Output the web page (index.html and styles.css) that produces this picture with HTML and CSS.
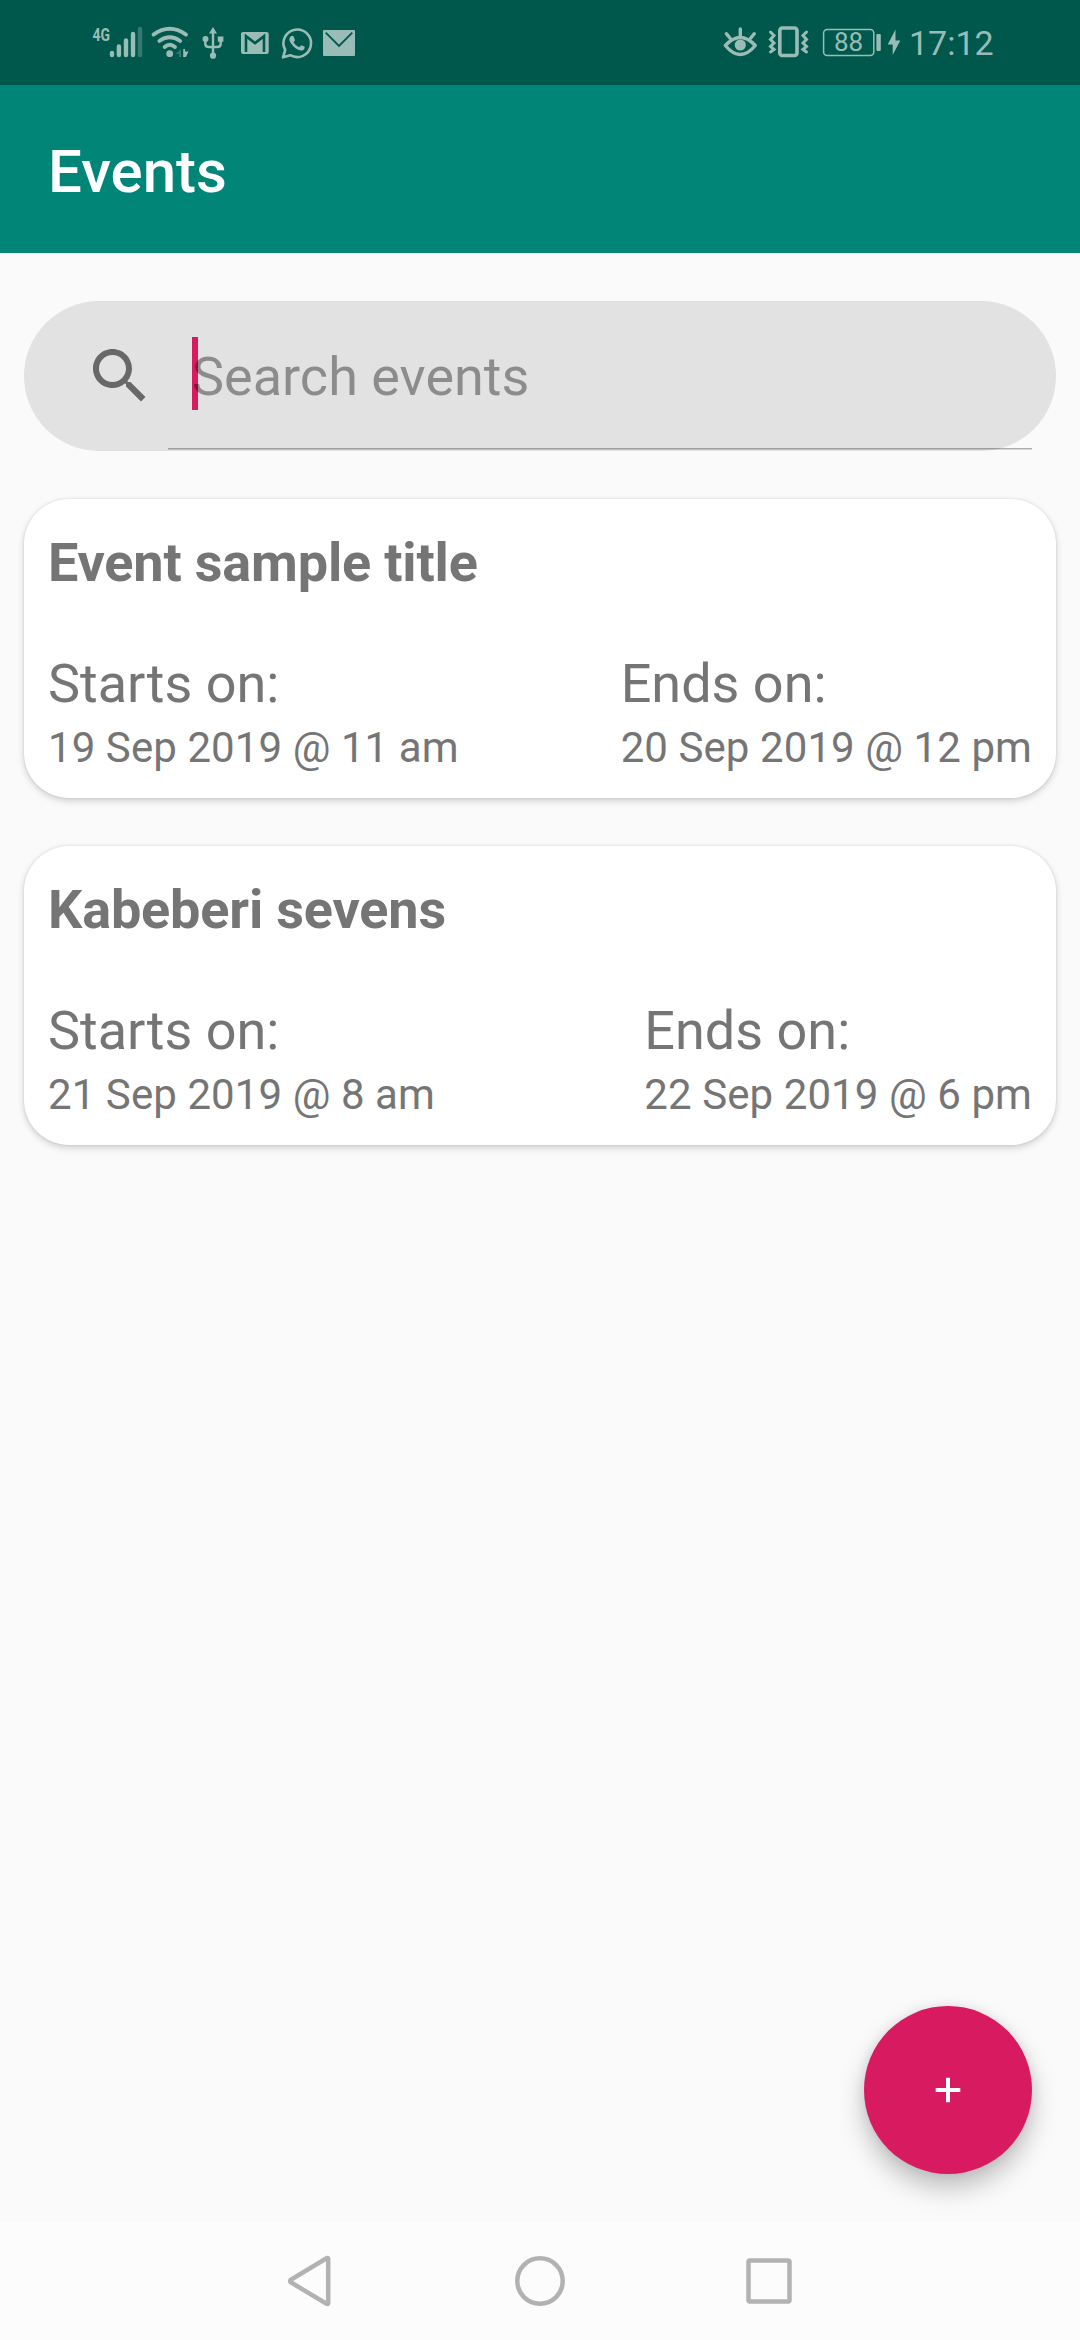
FILE: index.html
```html
<!DOCTYPE html>
<html lang="en">
<head>
<meta charset="utf-8">
<title>Events</title>
<link rel="stylesheet" href="styles.css">
</head>
<body>
<div class="screen">
  <header class="status-bar">
    <div class="status-group">
      <svg width="56" height="85" viewBox="90 0 56 85">
        <text class="network-type" x="92.5" y="40.7" textLength="17.5" lengthAdjust="spacingAndGlyphs">4G</text>
        <g class="line" stroke-width="4.4" stroke-linecap="round">
          <path d="M112 53V55M118.9 46.5V55M126 40.5V55M133 34V55"/>
          <path d="M140 29V55" opacity=".35"/>
        </g>
      </svg>
      <svg width="50" height="85" viewBox="146 0 50 85">
        <g class="line" stroke-width="3.8" stroke-linecap="round">
          <path d="M153.5 34.6Q169.7 23 186 34.6M159.3 41Q169.7 33.5 180.2 41M164.6 47Q169.7 42.5 175 47"/>
        </g>
        <circle class="solid" cx="169.7" cy="53.7" r="3.4"/>
        <path class="solid" d="M175.5 54L181 49.3V57H179V54Z" opacity=".35"/>
        <path class="solid" d="M183.2 49H185V51.5H188.5L186 57H183.2Z"/>
      </svg>
      <svg width="36" height="85" viewBox="196 0 36 85">
        <path class="line" stroke-width="2.4" d="M213 32V54M205.3 39V44Q205.3 47 209 47H217Q220.7 47 220.7 44V39"/>
        <path class="solid" d="M213 27L217 33.5H209Z"/>
        <circle class="solid" cx="213" cy="55.7" r="3.1"/>
        <circle class="solid" cx="205.5" cy="39" r="3"/>
        <rect class="solid" x="217.8" y="36.5" width="5.6" height="5.2"/>
      </svg>
      <svg width="44" height="85" viewBox="232 0 44 85">
        <rect class="solid" x="241" y="32" width="27.7" height="22" rx="2"/>
        <path class="cut" stroke-width="2.6" d="M246 52V36.2L255 43L264 36.2V52"/>
      </svg>
      <svg width="42" height="85" viewBox="276 0 42 85">
        <path class="line" stroke-width="2.6" stroke-linejoin="round" d="M283 57.3L285.2 50A13.8 13.8 0 1 1 290.3 55.2Z"/>
        <path class="solid" d="M291 36.2Q292.6 35.2 293.6 36.5L295 40Q295 41 293.5 42.3Q295.5 46.2 299.2 47.3L301 45.5Q302 45.2 304.7 46.8Q305.2 48.8 303 50.2Q300 51.3 295.5 48.2Q289.5 43.2 289.3 39.3Q289.5 37.2 291 36.2Z"/>
      </svg>
      <svg width="42" height="85" viewBox="318 0 42 85">
        <rect class="solid" x="323" y="30" width="32" height="26" rx="1"/>
        <path class="cut" stroke-width="1.8" d="M325.7 32.7L339 46L352.3 32.7"/>
      </svg>
    </div>
    <div class="status-group">
      <svg width="48" height="85" viewBox="716 0 48 85">
        <g class="line" stroke-width="3.4" stroke-linecap="round">
          <path d="M725.3 45.5Q740.3 29.5 755.3 45.5Q740.3 63.5 725.3 45.5Z" stroke-linejoin="round"/>
          <path d="M740.3 29V36M726.3 33.7L730.3 38.5M754.3 33.7L750.3 38.5"/>
        </g>
        <circle class="solid" cx="740.3" cy="45" r="5.6"/>
      </svg>
      <svg width="50" height="85" viewBox="764 0 50 85">
        <rect class="line" stroke-width="3.6" x="779.8" y="28" width="17.2" height="27.5" rx="2.5"/>
        <path class="line" stroke-width="3" stroke-linecap="round" d="M770.5 32L774 35.5L770.5 39.5L774 43L770.5 46.5L774 49.5L770.5 52M806.5 32L803 35.5L806.5 39.5L803 43L806.5 46.5L803 49.5L806.5 52"/>
      </svg>
      <svg width="70" height="85" viewBox="814 0 70 85">
        <rect class="line" stroke-width="1.5" x="823.6" y="29.5" width="50.2" height="26" rx="3.5"/>
        <rect class="solid" x="876.4" y="34" width="4.4" height="17" rx="1.2"/>
        <text class="battery-level" x="834" y="51.2">88</text>
      </svg>
      <svg width="25" height="85" viewBox="884 0 25 85">
        <path class="solid" d="M895.5 29.5L887.7 44.5H892.7V55L900.3 40.5H895.5Z"/>
      </svg>
      <time class="clock">17:12</time>
    </div>
  </header>

  <div class="app-bar"><h1 class="app-title">Events</h1></div>

  <main class="content">
    <div class="search">
      <svg class="search-icon" width="72" height="72" viewBox="0 0 24 24">
        <path d="M15.5 14h-.79l-.28-.27C15.41 12.59 16 11.11 16 9.5 16 5.91 13.09 3 9.5 3S3 5.91 3 9.5 5.91 16 9.5 16c1.61 0 3.09-.59 4.23-1.57l.27.28v.79l5 4.99L20.49 19l-4.99-5zm-6 0C7.01 14 5 11.99 5 9.5S7.01 5 9.5 5 14 7.01 14 9.5 11.99 14 9.5 14z"/>
      </svg>
      <div class="search-field"><span class="caret"></span><span class="placeholder">Search events</span></div>
    </div>

    <article class="card">
      <h2 class="card-title">Event sample title</h2>
      <div class="card-dates">
        <div><div class="label">Starts on:</div><div class="date">19 Sep 2019 @ 11 am</div></div>
        <div><div class="label">Ends on:</div><div class="date">20 Sep 2019 @ 12 pm</div></div>
      </div>
    </article>

    <article class="card">
      <h2 class="card-title">Kabeberi sevens</h2>
      <div class="card-dates">
        <div><div class="label">Starts on:</div><div class="date">21 Sep 2019 @ 8 am</div></div>
        <div><div class="label">Ends on:</div><div class="date">22 Sep 2019 @ 6 pm</div></div>
      </div>
    </article>

    <button class="fab" aria-label="Add event">
      <svg width="26" height="26" viewBox="0 0 26 26"><path d="M13 .7V25.3M.7 13H25.3" stroke="#fff" stroke-width="4"/></svg>
    </button>
  </main>

  <nav class="nav-bar">
    <svg width="50" height="54" viewBox="0 0 50 54"><path d="M42.2 4.7V49.3Q42 50.5 40.5 49.8L4.8 28.3Q3.5 27 4.8 25.7L40.5 4.2Q42 3.5 42.2 4.7Z"/></svg>
    <svg width="54" height="54" viewBox="0 0 54 54"><circle cx="27" cy="27" r="22.7"/></svg>
    <svg width="50" height="54" viewBox="0 0 50 54"><rect x="4.5" y="6.5" width="41" height="41" rx="1.5"/></svg>
  </nav>
</div>
</body>
</html>
```

FILE: styles.css
```css
* {
  box-sizing: border-box;
}

body {
  margin: 0;
  font-family: Roboto, "Liberation Sans", sans-serif;
  background: #fafafa;
}

h1,
h2 {
  margin: 0;
}

svg {
  display: block;
  flex: none;
}

.screen {
  display: flex;
  flex-direction: column;
  width: 1080px;
  height: 2340px;
  overflow: hidden;
}

/* Status bar */
.status-bar {
  display: flex;
  justify-content: space-between;
  height: 85px;
  padding: 0 85px 0 90px;
  background: #00574b;
  color: #99bcb7;
}

.status-group {
  display: flex;
}

.line {
  fill: none;
  stroke: #99bcb7;
}

.solid {
  fill: #99bcb7;
}

.cut {
  fill: none;
  stroke: #00574b;
}

.network-type {
  font-size: 19px;
  font-weight: 700;
  fill: #99bcb7;
}

.battery-level {
  font-size: 26px;
  fill: #99bcb7;
}

.clock {
  width: 86px;
  font-size: 34px;
  line-height: 87px;
  white-space: nowrap;
}

/* App bar */
.app-bar {
  display: flex;
  align-items: center;
  height: 168px;
  padding: 5px 48px 0;
  background: #008577;
}

.app-title {
  font-size: 60px;
  font-weight: 500;
  line-height: 70px;
  color: #fff;
}

.content {
  display: flex;
  flex: 1;
  flex-direction: column;
  gap: 48px;
  padding: 48px 24px;
}

/* Search */
.search {
  display: flex;
  align-items: flex-start;
  height: 150px;
  padding: 0 24px 0 60px;
  border-radius: 75px;
  background: #e2e2e2;
}

.search-icon {
  margin: 39px 12px 0 0;
  fill: #686868;
}

.search-field {
  display: flex;
  flex: 1;
  height: 149px;
  padding: 36px 24px 0;
  background: linear-gradient(rgba(0, 0, 0, 0.3) 50%, rgba(0, 0, 0, 0.15) 50%) bottom / 100% 2px no-repeat;
}

.caret {
  width: 6px;
  height: 73px;
  margin-right: -6px;
  background: #d81b60;
}

.placeholder {
  position: relative;
  font-size: 54px;
  line-height: 79px;
  color: rgba(0, 0, 0, 0.38);
}

/* Event cards */
.card {
  height: 299px;
  padding: 32px 24px 0;
  border-radius: 45px;
  background: #fff;
  box-shadow: 0 3px 7px rgba(0, 0, 0, 0.17), 0 0 3px rgba(0, 0, 0, 0.1);
  color: #757575;
}

.card-title {
  font-size: 54px;
  font-weight: 700;
  line-height: 64px;
  letter-spacing: -0.17px;
}

.card-dates {
  display: flex;
  justify-content: space-between;
  margin-top: 57px;
}

.label {
  font-size: 54px;
  line-height: 64px;
}

.date {
  margin-top: 7px;
  font-size: 42px;
  line-height: 50px;
  letter-spacing: 0.08px;
}

/* Floating action button */
.fab {
  display: flex;
  align-items: center;
  justify-content: center;
  align-self: flex-end;
  width: 168px;
  height: 168px;
  margin: auto 24px 0 0;
  padding: 0;
  border: 0;
  border-radius: 50%;
  background: #d81b60;
  box-shadow: 0 14px 26px rgba(0, 0, 0, 0.24), 0 0 12px rgba(0, 0, 0, 0.08);
}

/* System navigation */
.nav-bar {
  display: flex;
  align-items: center;
  justify-content: space-between;
  height: 118px;
  padding: 0 286px;
  background: #fcfcfc;
}

.nav-bar svg {
  fill: none;
  stroke: #b2b2b2;
  stroke-width: 4.5px;
}
```
